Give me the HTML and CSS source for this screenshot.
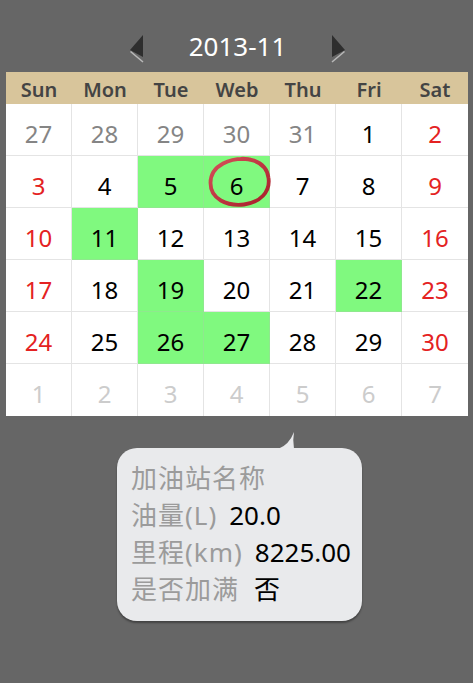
FILE: index.html
```html
<!DOCTYPE html>
<html>
<head>
<meta charset="utf-8">
<link rel="stylesheet" href="styles.css">
</head>
<body>
<div class="nav">
  <svg class="arrow" viewBox="0 0 16 28" width="16" height="28">
    <polygon points="14,0 14,22 1,15" fill="#2e2e2e"/>
    <line x1="1.5" y1="16.5" x2="14" y2="27" stroke="#b8b8b8" stroke-width="1.6"/>
  </svg>
  <div class="title">2013-11</div>
  <svg class="arrow" viewBox="0 0 16 28" width="16" height="28">
    <polygon points="2,0 2,22 15,15" fill="#2e2e2e"/>
    <line x1="14.5" y1="16.5" x2="2" y2="27" stroke="#b8b8b8" stroke-width="1.6"/>
  </svg>
</div>

<div class="calendar">
  <div class="week">
    <div>Sun</div><div>Mon</div><div>Tue</div><div>Web</div><div>Thu</div><div>Fri</div><div>Sat</div>
  </div>
  <div class="days">
    <div class="d prev">27</div><div class="d prev">28</div><div class="d prev">29</div><div class="d prev">30</div><div class="d prev">31</div><div class="d">1</div><div class="d wk">2</div>
    <div class="d wk">3</div><div class="d">4</div><div class="d on">5</div><div class="d on mark">6<svg class="circle" viewBox="0 0 66 52" width="66" height="52"><defs><linearGradient id="g" x1="0" y1="0" x2="1" y2="1"><stop offset="0" stop-color="#d6505a"/><stop offset="1" stop-color="#a61e2a"/></linearGradient></defs><path d="M46 3.4 C27 1 6.5 9 6.5 27 C6.5 43 23 50.5 40 48.5 C56 46.5 66.5 36 64.5 22 C63.5 13 58 7.5 50 4.6 C45 3 41 2.6 37 2.8" fill="none" stroke="url(#g)" stroke-width="3.8" stroke-linecap="round"/></svg></div><div class="d">7</div><div class="d">8</div><div class="d wk">9</div>
    <div class="d wk">10</div><div class="d on">11</div><div class="d">12</div><div class="d">13</div><div class="d">14</div><div class="d">15</div><div class="d wk">16</div>
    <div class="d wk">17</div><div class="d">18</div><div class="d on">19</div><div class="d">20</div><div class="d">21</div><div class="d on">22</div><div class="d wk">23</div>
    <div class="d wk">24</div><div class="d">25</div><div class="d on">26</div><div class="d on">27</div><div class="d">28</div><div class="d">29</div><div class="d wk">30</div>
    <div class="d next last">1</div><div class="d next last">2</div><div class="d next last">3</div><div class="d next last">4</div><div class="d next last">5</div><div class="d next last">6</div><div class="d next last">7</div>
  </div>
</div>

<div class="popup">
  <svg class="tail" viewBox="0 0 20 18" width="20" height="18"><path d="M0 18 Q 11 14 16 1 Q 14.5 9 16 18 Z" fill="#e9eaec"/></svg>
  <div class="line"><span class="lab">加油站名称</span></div>
  <div class="line"><span class="lab">油量(L)</span><span class="val">20.0</span></div>
  <div class="line"><span class="lab">里程(km)</span><span class="val">8225.00</span></div>
  <div class="line"><span class="lab">是否加满</span><span class="val last">否</span></div>
</div>
</body>
</html>
```
FILE: styles.css
```css
html, body {
  margin: 0;
  padding: 0;
  background: #666666;
}
body {
  font-family: "Noto Sans", "Noto Sans CJK SC", sans-serif;
  width: 473px;
  height: 683px;
  overflow: hidden;
}
.nav {
  height: 72px;
  display: flex;
  justify-content: center;
  align-items: flex-start;
  gap: 44px;
  padding-left: 2px;
  box-sizing: border-box;
}
.arrow {
  margin-top: 35px;
  display: block;
}
.title {
  margin-top: 28px;
  color: #ffffff;
  font-size: 26px;
  line-height: 36px;
}
.calendar {
  margin-left: 6px;
  width: 462px;
}
.week {
  display: grid;
  grid-template-columns: repeat(7, 66px);
  background: #d8c59b;
  height: 32px;
}
.week div {
  text-align: center;
  color: #444444;
  font-size: 20px;
  font-weight: 600;
  line-height: 28px;
  padding-top: 4px;
}
.days {
  display: grid;
  grid-template-columns: repeat(7, 66px);
  background: #ffffff;
}
.d {
  position: relative;
  height: 52px;
  box-sizing: border-box;
  border-right: 1px solid #e4e4e4;
  border-bottom: 1px solid #e4e4e4;
  text-align: center;
  font-size: 24px;
  line-height: 44px;
  padding-top: 8px;
  color: #000000;
}
.d:nth-child(7n) {
  border-right: none;
}
.d.last {
  border-bottom: none;
}
.d.prev { color: #858585; }
.d.next { color: #cccccc; }
.d.wk { color: #e42222; }
.d.on { background: #80f97f; border-color: #8fe88e; }
.circle {
  position: absolute;
  left: 0;
  top: 0;
  overflow: visible;
}
.popup {
  position: relative;
  margin-top: 32px;
  margin-left: 117px;
  width: 245px;
  height: 173px;
  box-sizing: border-box;
  padding: 12px 0 0 14px;
  background: #e9eaec;
  border-radius: 20px;
  box-shadow: 0 2px 2px rgba(0,0,0,0.35);
  font-size: 26px;
  line-height: 37px;
}
.tail {
  position: absolute;
  left: 161px;
  top: -17px;
  display: block;
}
.line {
  height: 37px;
  white-space: nowrap;
}
.lab { color: #9b9b9b; letter-spacing: 1px; }
.val { color: #000000; margin-left: 12px; letter-spacing: 0; }
.val.last { margin-left: 15px; }
```
